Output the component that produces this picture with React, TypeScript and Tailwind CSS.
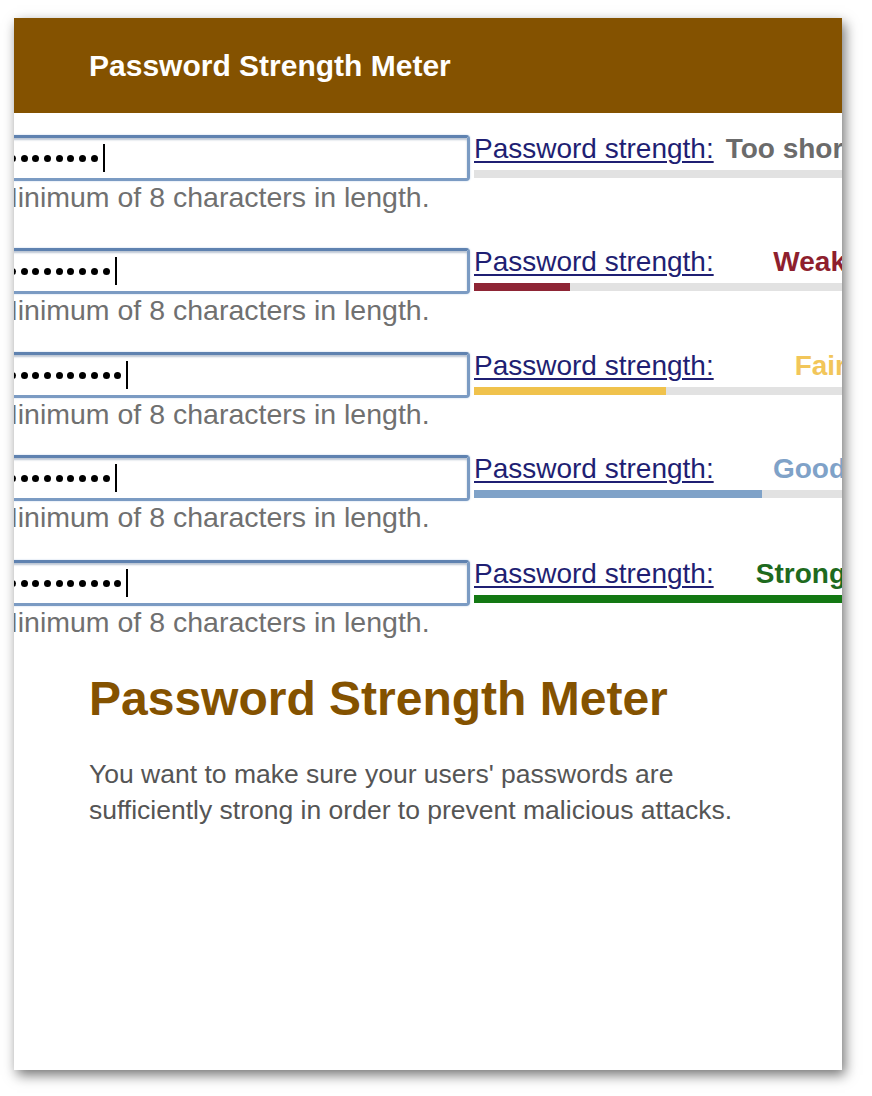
const rows = [
  { dots: 8, label: "Too short", text: "text-[#6b6b6b]", fill: 0, bar: "bg-transparent", gap: "mb-[37px]" },
  { dots: 9, label: "Weak", text: "text-[#8e1f2e]", fill: 25, bar: "bg-[#8e2535]", gap: "mb-[28px]" },
  { dots: 10, label: "Fair", text: "text-[#f2c65a]", fill: 50, bar: "bg-[#f0c24c]", gap: "mb-[27px]" },
  { dots: 9, label: "Good", text: "text-[#7fa2c8]", fill: 75, bar: "bg-[#7fa2c8]", gap: "mb-[29px]" },
  { dots: 10, label: "Strong", text: "text-[#1e6a1e]", fill: 100, bar: "bg-[#137813]", gap: "" },
];

function MeterRow({ row }: { row: (typeof rows)[number] }) {
  return (
    <div className={row.gap}>
      <div className="flex items-start">
        <div className="ml-[-20px] w-[476px] h-[46px] shrink-0 rounded-[4px] border-[3px] border-[#7b9bc3] border-t-[#5f82b0] bg-white shadow-[0_0_2px_#b9cfe8,inset_0_2px_2px_rgba(60,90,130,0.35)] flex items-center pl-[12px]">
          <div className="flex items-center gap-[4.7px]">
            {Array.from({ length: row.dots }).map((_, i) => (
              <div key={i} className="w-[7px] h-[7px] rounded-full bg-black" />
            ))}
          </div>
          <div className="ml-[5px] w-[2px] h-[28px] bg-black" />
        </div>
        <div className="ml-[4px] w-[372px] shrink-0">
          <div className="flex gap-[12px] text-[28px] leading-[28px] whitespace-nowrap">
            <span className="underline text-[#1f1f73] decoration-[1.5px] underline-offset-[3px]">Password strength:</span>
            <span className={`flex-1 text-right font-bold ${row.text}`}>{row.label}</span>
          </div>
          <div className="mt-[7px] h-[8px] w-[384px] bg-[#e2e2e2]">
            <div className={`h-full ${row.bar}`} style={{ width: `${row.fill}%` }} />
          </div>
        </div>
      </div>
      <div className="mt-[2px] ml-[-20px] text-[28.5px] leading-[28px] text-[#707070] whitespace-nowrap">
        Minimum of 8 characters in length.
      </div>
    </div>
  );
}

export default function App() {
  return (
    <div className="min-h-[1096px] bg-white pt-[18px] pl-[14px] font-['Liberation_Sans',Arial,sans-serif]">
      <div className="w-[828px] h-[1052px] bg-white overflow-hidden shadow-[3px_5px_12px_rgba(0,0,0,0.55)]">
        <div className="h-[95px] bg-[#845200] flex items-center pl-[75px]">
          <h1 className="text-white font-bold text-[30px] leading-none">Password Strength Meter</h1>
        </div>

        <div className="pt-[22px]">
          {rows.map((row, i) => (
            <MeterRow key={i} row={row} />
          ))}
        </div>

        <div className="px-[75px] pt-[39px]">
          <h2 className="text-[#845200] font-bold text-[48px] leading-none">Password Strength Meter</h2>
          <p className="mt-[33px] text-[26.5px] leading-[36px] text-[#555555] w-[670px]">
            You want to make sure your users' passwords are sufficiently strong in order to prevent malicious attacks.
          </p>
        </div>
      </div>
    </div>
  );
}
